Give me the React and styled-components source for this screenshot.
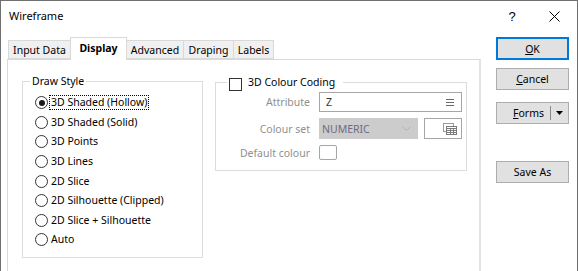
import React from "react";
import styled, { createGlobalStyle } from "styled-components";

const GlobalStyle = createGlobalStyle`
  html, body {
    margin: 0;
    padding: 0;
    background: #ffffff;
  }
  body {
    font-family: "Noto Sans", "Liberation Sans", sans-serif;
    font-size: 10.5px;
    color: #000;
  }
`;

const tabs = [
  { label: "Input Data", width: 63 },
  { label: "Display", width: 57, active: true },
  { label: "Advanced", width: 58 },
  { label: "Draping", width: 51 },
  { label: "Labels", width: 41 },
];

const drawStyles = [
  "3D Shaded (Hollow)",
  "3D Shaded (Solid)",
  "3D Points",
  "3D Lines",
  "2D Slice",
  "2D Silhouette (Clipped)",
  "2D Slice + Silhouette",
  "Auto",
];

const App = () => {
  return (
    <>
      <GlobalStyle />
      <Window>
        <TitleBar>
          <Title>Wireframe</Title>
          <TitleButtons>
            <HelpButton>?</HelpButton>
            <CloseButton>
              <svg width="11" height="11" viewBox="0 0 11 11">
                <path d="M0.5 0.5 L10.5 10.5 M10.5 0.5 L0.5 10.5" stroke="#000" strokeWidth="1" />
              </svg>
            </CloseButton>
          </TitleButtons>
        </TitleBar>

        <Body>
          <TabControl>
            <TabStrip>
              {tabs.map((t) => (
                <Tab key={t.label} $active={t.active} $width={t.width}>
                  {t.label}
                </Tab>
              ))}
            </TabStrip>
            <TabPanel>
              <DrawStyleGroup>
                <Legend>Draw Style</Legend>
                <RadioList>
                  {drawStyles.map((s, i) => (
                    <RadioRow key={s}>
                      <RadioCircle $checked={i === 0} />
                      <RadioLabel $focused={i === 0}>{s}</RadioLabel>
                    </RadioRow>
                  ))}
                </RadioList>
              </DrawStyleGroup>

              <ColourGroup>
                <CheckLegend>
                  <CheckBox />
                  <span>3D Colour Coding</span>
                </CheckLegend>
                <FormGrid>
                  <FieldLabel>Attribute</FieldLabel>
                  <TextField>
                    <span>Z</span>
                    <svg width="8" height="7" viewBox="0 0 8 7">
                      <path d="M0 0.5 H8 M0 3.5 H8 M0 6.5 H8" stroke="#6a6a6a" strokeWidth="1" />
                    </svg>
                  </TextField>

                  <FieldLabel>Colour set</FieldLabel>
                  <SelectRow>
                    <SelectBox>
                      <span>NUMERIC</span>
                      <svg width="9" height="5" viewBox="0 0 9 5">
                        <path d="M0.5 0.5 L4.5 4.5 L8.5 0.5" stroke="#b4b4b4" fill="none" strokeWidth="1" />
                      </svg>
                    </SelectBox>
                    <IconButton>
                      <svg width="14" height="12" viewBox="0 0 14 12">
                        <rect x="0.5" y="0.5" width="10" height="8" fill="none" stroke="#9a9a9a" />
                        <rect x="3.5" y="3.5" width="10" height="8" fill="#fff" stroke="#7a7a7a" />
                        <path d="M3.5 5.5 H13.5 M3.5 7.5 H13.5 M3.5 9.5 H13.5 M7.5 5.5 V11.5 M10.5 5.5 V11.5" stroke="#7a7a7a" strokeWidth="1" />
                      </svg>
                    </IconButton>
                  </SelectRow>

                  <FieldLabel>Default colour</FieldLabel>
                  <ColourSwatch />
                </FormGrid>
              </ColourGroup>
            </TabPanel>
          </TabControl>

          <ButtonColumn>
            <DialogButton $default>
              <u>O</u>K
            </DialogButton>
            <DialogButton $top={8}>
              <u>C</u>ancel
            </DialogButton>
            <SplitButton $top={12}>
              <SplitText>
                <u>F</u>orms
              </SplitText>
              <SplitDivider />
              <svg width="7" height="4" viewBox="0 0 7 4">
                <path d="M0 0 H7 L3.5 4 Z" fill="#000" />
              </svg>
            </SplitButton>
            <DialogButton $top={37}>Save As</DialogButton>
          </ButtonColumn>
        </Body>
      </Window>
    </>
  );
};

export default App;

const Window = styled.div`
  width: 578px;
  height: 271px;
  box-sizing: border-box;
  border: 1px solid #707070;
  border-bottom: none;
  overflow: hidden;
  background: #fff;
  display: flex;
  flex-direction: column;
`;

const TitleBar = styled.div`
  height: 30px;
  display: flex;
  align-items: center;
  justify-content: space-between;
  flex-shrink: 0;
`;

const Title = styled.div`
  font-size: 11px;
  padding-left: 8px;
  padding-bottom: 1px;
`;

const TitleButtons = styled.div`
  display: flex;
  align-items: center;
  height: 100%;
`;

const HelpButton = styled.div`
  width: 46px;
  text-align: center;
  font-size: 13px;
  font-family: "Liberation Sans", sans-serif;
  margin-right: -4px;
`;

const CloseButton = styled.div`
  width: 46px;
  display: flex;
  justify-content: center;
  align-items: center;
  padding-top: 1px;
`;

const Body = styled.div`
  display: flex;
  align-items: flex-start;
  padding: 6px 0 0 6px;
  flex: 1;
`;

const TabControl = styled.div`
  width: 474px;
  display: flex;
  flex-direction: column;
`;

const TabStrip = styled.div`
  display: flex;
  align-items: flex-end;
  height: 22px;
  padding-left: 1px;
  position: relative;
  z-index: 1;
`;

const Tab = styled.div`
  box-sizing: border-box;
  width: ${(p) => p.$width}px;
  height: ${(p) => (p.$active ? 23 : 19)}px;
  margin-right: -1px;
  margin-bottom: ${(p) => (p.$active ? -1 : 0)}px;
  border: 1px solid #d9d9d9;
  border-bottom: ${(p) => (p.$active ? "none" : "1px solid #d9d9d9")};
  background: ${(p) => (p.$active ? "#fff" : "#f0f0f0")};
  font-weight: ${(p) => (p.$active ? 700 : 400)};
  display: flex;
  align-items: ${(p) => (p.$active ? "flex-start" : "center")};
  padding-top: ${(p) => (p.$active ? 3 : 0)}px;
  justify-content: center;
  position: relative;
  z-index: ${(p) => (p.$active ? 2 : 0)};
`;

const TabPanel = styled.div`
  box-sizing: border-box;
  height: 240px;
  border: 1px solid #d9d9d9;
  border-right: 2px solid #e3e3e3;
  display: flex;
  align-items: flex-start;
  padding: 13px 0 0 14px;
  gap: 12px;
`;

const GroupBox = styled.fieldset`
  box-sizing: border-box;
  margin: 0;
  padding: 0;
  border: 1px solid #dcdcdc;
  min-width: 0;
`;

const DrawStyleGroup = styled(GroupBox)`
  width: 181px;
  height: 185px;
`;

const ColourGroup = styled(GroupBox)`
  width: 252px;
  height: 97px;
  margin-top: 1px;
`;

const Legend = styled.legend`
  margin-left: 7px;
  padding: 0 2px;
  line-height: 16px;
`;

const CheckLegend = styled.legend`
  margin-left: 11px;
  padding: 0 8px 0 2px;
  height: 16px;
  display: flex;
  align-items: center;
  gap: 6px;
  line-height: 16px;
`;

const CheckBox = styled.span`
  box-sizing: border-box;
  width: 13px;
  height: 13px;
  border: 1px solid #333;
  background: #fff;
  margin-top: 4px;
`;

const RadioList = styled.div`
  padding: 4px 0 0 12px;
  display: flex;
  flex-direction: column;
`;

const RadioRow = styled.div`
  height: 19.6px;
  display: flex;
  align-items: center;
`;

const RadioCircle = styled.span`
  box-sizing: border-box;
  width: 13px;
  height: 13px;
  border-radius: 50%;
  border: 1px solid #333;
  background: #fff;
  display: flex;
  align-items: center;
  justify-content: center;
  margin-right: 3px;
  flex-shrink: 0;

  &::after {
    content: "";
    width: 6px;
    height: 6px;
    border-radius: 50%;
    background: ${(p) => (p.$checked ? "#1a1a1a" : "transparent")};
  }
`;

const RadioLabel = styled.span`
  line-height: 13px;
  padding: 0 1px;
  margin-left: -1px;
  outline: ${(p) => (p.$focused ? "1px dotted #000" : "none")};
  white-space: nowrap;
`;

const FormGrid = styled.div`
  display: grid;
  grid-template-columns: 94px auto;
  column-gap: 9px;
  row-gap: 6px;
  align-items: center;
  justify-items: start;
  padding-top: 2px;
`;

const FieldLabel = styled.div`
  justify-self: end;
  color: #8f8f8f;
  white-space: nowrap;
`;

const TextField = styled.div`
  box-sizing: border-box;
  width: 143px;
  height: 20px;
  border: 1px solid #a6a6a6;
  display: flex;
  align-items: center;
  justify-content: space-between;
  padding: 0 7px 0 6px;
  color: #333;
`;

const SelectRow = styled.div`
  display: flex;
  gap: 6px;
`;

const SelectBox = styled.div`
  box-sizing: border-box;
  width: 99px;
  height: 21px;
  background: #cccccc;
  border: 1px solid #cccccc;
  display: flex;
  align-items: center;
  justify-content: space-between;
  padding: 0 6px 0 2px;
  color: #6b6b85;
`;

const IconButton = styled.div`
  box-sizing: border-box;
  width: 38px;
  height: 21px;
  border: 1px solid #a6a6a6;
  background: #fff;
  display: flex;
  align-items: center;
  justify-content: flex-end;
  padding-right: 4px;
`;

const ColourSwatch = styled.div`
  box-sizing: border-box;
  width: 18px;
  height: 15px;
  border: 1px solid #a6a6a6;
  border-radius: 2px;
`;

const ButtonColumn = styled.div`
  display: flex;
  flex-direction: column;
  margin-left: 15px;
`;

const DialogButton = styled.div`
  box-sizing: border-box;
  width: 73px;
  height: ${(p) => (p.$default ? 23 : 22)}px;
  margin-top: ${(p) => p.$top || 0}px;
  background: #e1e1e1;
  border: ${(p) => (p.$default ? "2px solid #0078d7" : "1px solid #adadad")};
  display: flex;
  align-items: center;
  justify-content: center;
`;

const SplitButton = styled(DialogButton)`
  justify-content: flex-end;
  padding-right: 5px;
`;

const SplitText = styled.span`
  margin-right: 6px;
`;

const SplitDivider = styled.span`
  width: 1px;
  height: 14px;
  background: #8a8a8a;
  margin-right: 5px;
`;
